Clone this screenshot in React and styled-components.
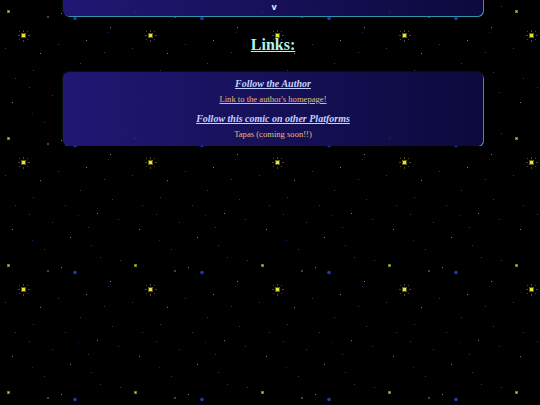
import React from "react";
import styled, { createGlobalStyle } from "styled-components";

// one 127px tile of the star field, repeated over the whole page
const starTile = `
<svg xmlns='http://www.w3.org/2000/svg' width='127' height='127'>
  <g fill='#4a4a12'>
    <rect x='23' y='30' width='1' height='2'/>
    <rect x='23' y='40' width='1' height='2'/>
    <rect x='18' y='35' width='2' height='1'/>
    <rect x='28' y='35' width='2' height='1'/>
    <rect x='19' y='31' width='1' height='1'/>
    <rect x='27' y='31' width='1' height='1'/>
    <rect x='19' y='39' width='1' height='1'/>
    <rect x='27' y='39' width='1' height='1'/>
  </g>
  <rect x='21' y='33' width='5' height='5' fill='#5c5c16'/>
  <rect x='22' y='34' width='3' height='3' fill='#e6e636'/>
  <rect x='7' y='10' width='3' height='3' fill='#7a7a1c'/>
  <rect x='8' y='11' width='1' height='1' fill='#d2d23c'/>
  <circle cx='75' cy='18.5' r='1.8' fill='#1c3cb0'/>
  <rect x='47' y='16' width='2' height='2' fill='#24581f'/>
  <g fill='#7a7a7a'>
    <rect x='86' y='40' width='1' height='1'/>
    <rect x='61' y='13' width='1' height='1'/>
    <rect x='110' y='27' width='1' height='1'/>
    <rect x='40' y='53' width='1' height='1'/>
    <rect x='97' y='86' width='1' height='1'/>
    <rect x='12' y='102' width='1' height='1'/>
    <rect x='70' y='110' width='1' height='1'/>
  </g>
  <g fill='#3c3c3c'>
    <rect x='5' y='48' width='1' height='1'/>
    <rect x='33' y='70' width='1' height='1'/>
    <rect x='52' y='95' width='1' height='1'/>
    <rect x='80' y='63' width='1' height='1'/>
    <rect x='104' y='52' width='1' height='1'/>
    <rect x='118' y='92' width='1' height='1'/>
    <rect x='65' y='78' width='1' height='1'/>
    <rect x='15' y='78' width='1' height='1'/>
    <rect x='91' y='118' width='1' height='1'/>
    <rect x='120' y='6' width='1' height='1'/>
    <rect x='44' y='122' width='1' height='1'/>
    <rect x='100' y='3' width='1' height='1'/>
  </g>
  <g fill='#33402a'>
    <rect x='29' y='87' width='1' height='1'/>
    <rect x='88' y='100' width='1' height='1'/>
    <rect x='58' y='44' width='1' height='1'/>
    <rect x='112' y='72' width='1' height='1'/>
  </g>
  <g fill='#1a2266'>
    <rect x='78' y='88' width='1' height='1'/>
    <rect x='32' y='113' width='1' height='1'/>
    <rect x='108' y='32' width='1' height='1'/>
  </g>
</svg>`;

const GlobalStyle = createGlobalStyle`
  html, body {
    margin: 0;
    background-color: #000;
    background-image: url("data:image/svg+xml,${encodeURIComponent(starTile)}");
    background-size: 127px 127px;
    background-repeat: repeat;
  }
  body {
    font-family: "Liberation Serif", "DejaVu Serif", serif;
  }
`;

const Page = styled.main`
  padding-left: 6px;
  display: flex;
  flex-direction: column;
  align-items: center;
`;

const Panel = styled.section`
  box-sizing: border-box;
  width: 420px;
  border-radius: 6px;
  background: linear-gradient(90deg, rgba(35, 24, 122, 0.95) 0%, rgba(12, 10, 64, 0.95) 100%);
  box-shadow: 1px 1px 0 #2f93ac, 0 0 2px rgba(47, 147, 172, 0.4);
  text-align: center;
`;

const ComicPanel = styled(Panel)`
  height: 56px;
  margin-top: -40px;
  display: flex;
  align-items: flex-end;
  justify-content: center;
  padding-bottom: 4px;
`;

const ScrollHint = styled.span`
  color: #e8e8f4;
  font-family: "DejaVu Sans", sans-serif;
  font-weight: bold;
  font-size: 8px;
  line-height: 8px;
  margin-left: 2px;
`;

const Heading = styled.h2`
  margin: 20px 0 18px;
  font-size: 16px;
  line-height: 18px;
  font-weight: bold;
  color: #b4f2ea;
  text-decoration: underline;
`;

const LinksPanel = styled(Panel)`
  padding: 5px 12px 5px;
`;

const Subhead = styled.h3`
  margin: 0;
  font-size: 10px;
  line-height: 14px;
  font-style: italic;
  font-weight: bold;
  color: #c4d2ff;
  text-decoration: underline;
`;

const Item = styled.p`
  margin: 2px 0 6px;
  font-size: 8.6px;
  line-height: 13px;
  color: #e2bc7c;
  text-decoration: ${(p) => (p.$link ? "underline" : "none")};

  &:last-child {
    margin-bottom: 0;
  }
`;

export default function App() {
  return (
    <>
      <GlobalStyle />
      <Page>
        <ComicPanel>
          <ScrollHint>v</ScrollHint>
        </ComicPanel>
        <Heading>Links:</Heading>
        <LinksPanel>
          <Subhead>Follow the Author</Subhead>
          <Item $link>Link to the author's homepage!</Item>
          <Subhead>Follow this comic on other Platforms</Subhead>
          <Item>Tapas (coming soon!!)</Item>
        </LinksPanel>
      </Page>
    </>
  );
}
